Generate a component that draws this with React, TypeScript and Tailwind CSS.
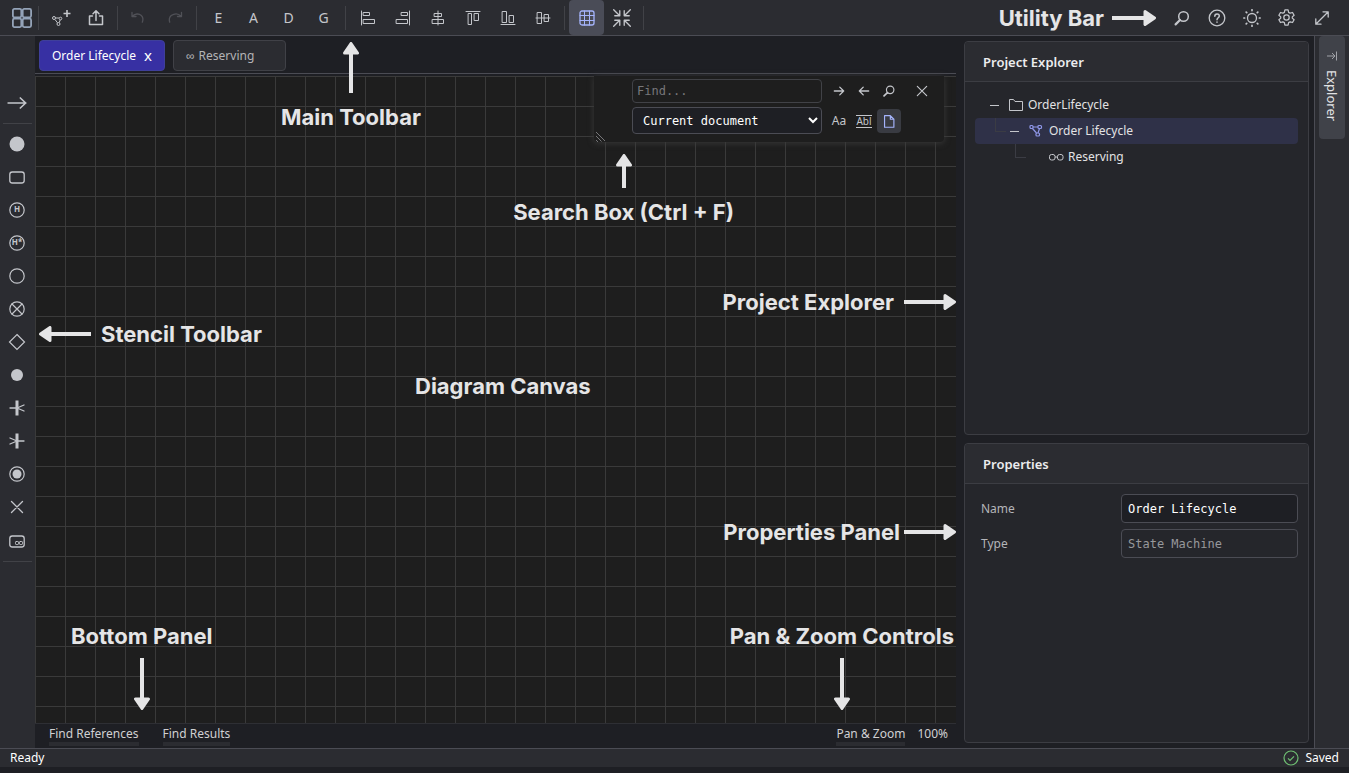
import { useState } from "react";
import type { ReactNode } from "react";
import clsx from "clsx";

type Direction = "up" | "down" | "left" | "right";

const Icon = ({ size = 18, children }: { size?: number; children: ReactNode }) => (
    <svg width={size} height={size} viewBox="0 0 18 18" fill="none" stroke="currentColor" strokeWidth="1" strokeLinecap="round" strokeLinejoin="round" aria-hidden="true">
        {children}
    </svg>
);

const Arrow = ({ direction, length }: { direction: Direction; length: number }) => {
    const vertical = direction === "up" || direction === "down";
    const transforms = {
        right: "",
        left: `rotate(180 ${length / 2} 8)`,
        up: `translate(0 ${length}) rotate(-90)`,
        down: "translate(16 0) rotate(90)",
    };

    return (
        <svg width={vertical ? 16 : length} height={vertical ? length : 16} fill="#e5e5e6" stroke="#e5e5e6" aria-hidden="true" className="shrink-0">
            <g transform={transforms[direction]}>
                <path d={`M0 8H${length - 8}`} strokeWidth="4" />
                <path d={`M${length - 11} 1.5L${length - 1.5} 8L${length - 11} 14.5Z`} strokeWidth="3" strokeLinejoin="round" />
            </g>
        </svg>
    );
};

const Label = ({ children }: { children: ReactNode }) => (
    <span className="font-['Inter',sans-serif] text-[22px] leading-7 font-bold whitespace-nowrap text-[#e5e5e6]">{children}</span>
);

const ToolButton = ({ label, active, disabled, children }: { label: string; active?: boolean; disabled?: boolean; children: ReactNode }) => (
    <button
        type="button"
        aria-label={label}
        disabled={disabled}
        className={clsx(
            "flex h-[35px] w-[35px] shrink-0 items-center justify-center rounded text-sm",
            active ? "bg-[#4a4c57] text-[#a5b4fc]" : disabled ? "text-[#505157]" : "text-[#c4c6cb]"
        )}
    >
        {children}
    </button>
);

const Divider = () => <div className="mx-1 h-6 w-px shrink-0 bg-[#414247]" />;

const alignTools = [
    { label: "Align left", icon: <path d="M2.5 2v14M4.5 3.5h6v3h-6zM4.5 10.5h11v4h-11z" /> },
    { label: "Align right", icon: <path d="M15.5 2v14M7.5 3.5h6v3h-6zM2.5 10.5h11v4h-11z" /> },
    { label: "Align center", icon: <path d="M9 2v14M5.5 4.5h7v3h-7zM3.5 10.5h11v4h-11z" /> },
    { label: "Align top", icon: <path d="M2 2.5h14M4.5 4.5h3v11h-3zM10.5 4.5h4v7h-4z" /> },
    { label: "Align bottom", icon: <path d="M2 15.5h14M3.5 2.5h4v11h-4zM10.5 6.5h4v7h-4z" /> },
    { label: "Align middle", icon: <path d="M2 9h14M3.5 3.5h4v11h-4zM10.5 5.5h4v7h-4z" /> },
];

const SearchIcon = ({ size = 18 }: { size?: number }) => (
    <Icon size={size}>
        <circle cx="10.5" cy="7.5" r="4.8" strokeWidth="1.5" />
        <path d="M7 11L2.6 15.4" strokeWidth="2.2" />
    </Icon>
);

const MainToolbar = () => (
    <header className="flex h-9 shrink-0 items-center border-b border-[#4b4c54] bg-[#2b2c31] pr-2.5">
        <button type="button" aria-label="Home" className="shrink-0 pr-0.5 pl-3 text-[#94a3b8]">
            <svg width="20" height="20" viewBox="0 0 20 20" fill="none" stroke="currentColor" strokeWidth="1.8" aria-hidden="true">
                <rect x="0.9" y="0.9" width="8.4" height="8.4" rx="1.5" />
                <rect x="10.7" y="0.9" width="8.4" height="8.4" rx="1.5" />
                <rect x="0.9" y="10.7" width="8.4" height="8.4" rx="1.5" />
                <rect x="10.7" y="10.7" width="8.4" height="8.4" rx="1.5" />
            </svg>
        </button>
        <Divider />
        <ToolButton label="New diagram">
            <svg width="20" height="20" viewBox="0 0 20 20" fill="none" stroke="currentColor" aria-hidden="true">
                <circle cx="3" cy="10" r="1.5" />
                <circle cx="9.5" cy="10.5" r="1.3" />
                <circle cx="7.5" cy="16" r="1.5" />
                <path d="M4.5 10h3.500M4 11.500l2.500 3.300M9.200 12l-1 2.500" />
                <path d="M16 2v7M12.5 5.500h7" strokeWidth="1.600" />
            </svg>
        </ToolButton>
        <ToolButton label="Export">
            <Icon>
                <path d="M5.500 7h-3v8.500h13V7h-3M9 11.500V2M6 4.800L9 1.800l3 3" strokeWidth="1.500" />
            </Icon>
        </ToolButton>
        <Divider />
        <ToolButton label="Undo" disabled>
            <Icon>
                <path d="M1 3.500v4h4M1.300 7.200C4 4.500 8 4.300 10.300 6.500c1.800 1.800 2.100 4 1 6.700" strokeWidth="1.300" />
            </Icon>
        </ToolButton>
        <ToolButton label="Redo" disabled>
            <Icon>
                <path d="M15.500 3.500v4h-4M15.200 7.200C12.500 4.500 8.500 4.300 5.200 6.500c-2 1.800-2.300 4-1.500 6.700" strokeWidth="1.300" />
            </Icon>
        </ToolButton>
        <Divider />
        {["E", "A", "D", "G"].map((letter) => (
            <ToolButton key={letter} label={letter}>{letter}</ToolButton>
        ))}
        <Divider />
        {alignTools.map((tool) => (
            <ToolButton key={tool.label} label={tool.label}>
                <Icon>{tool.icon}</Icon>
            </ToolButton>
        ))}
        <Divider />
        <ToolButton label="Toggle grid" active>
            <Icon>
                <rect x="2" y="2" width="14" height="14" rx="2" strokeWidth="1.300" />
                <path d="M6.500 2v14M11.500 2v14M2 6.500h14M2 11.500h14" />
            </Icon>
        </ToolButton>
        <ToolButton label="Fit to screen">
            <Icon size={20}>
                <path d="M1.500 1.500l5 5M7 2.500v4.500h-4.500M16.500 1.500l-5 5M11 2.500v4.500h4.500M1.500 16.500l5-5M7 15.500v-4.500h-4.500M16.500 16.500l-5-5M11 15.500v-4.500h4.500" strokeWidth="1.200" />
            </Icon>
        </ToolButton>
        <Divider />
        <div className="ml-auto flex items-center">
            <Label>Utility Bar</Label>
            <div className="mx-2 flex">
                <Arrow direction="right" length={44} />
            </div>
            <ToolButton label="Search">
                <SearchIcon />
            </ToolButton>
            <ToolButton label="Help">
                <Icon>
                    <circle cx="9" cy="9" r="7.800" strokeWidth="1.300" />
                    <path d="M6.800 7.200c0-3 4.500-3 4.500-.2C11.300 8.800 9 8.800 9 10.800M9 13v.2" strokeWidth="1.500" />
                </Icon>
            </ToolButton>
            <ToolButton label="Theme">
                <Icon>
                    <circle cx="9" cy="9" r="4.500" strokeWidth="1.300" />
                    <path d="M9 .8v.8M9 16.400v.8M.8 9h.8M16.400 9h.8M3.200 3.200l.5.5M14.300 14.300l.5.5M3.200 14.800l.5-.5M14.300 3.700l.5-.5" strokeWidth="1.700" />
                </Icon>
            </ToolButton>
            <ToolButton label="Settings">
                <svg width="19" height="19" viewBox="0 0 24 24" fill="none" stroke="currentColor" strokeWidth="1.600" strokeLinejoin="round" aria-hidden="true">
                    <path d="M10 2.500h4l.7 3 1.900 1.100 3-.9 2 3.400-2.300 2.100v1.600l2.300 2.100-2 3.400-3-.9-1.900 1.100-.7 3h-4l-.7-3-1.900-1.100-3 .9-2-3.400 2.300-2.100v-1.600L2.400 9.100l2-3.400 3 .9 1.900-1.100z" />
                    <circle cx="12" cy="12" r="3.400" />
                </svg>
            </ToolButton>
            <ToolButton label="Full screen">
                <Icon>
                    <path d="M3 15L15 3M10 2.800h5.200V8M2.800 10v5.200H8" strokeWidth="1.300" />
                </Icon>
            </ToolButton>
        </div>
    </header>
);

const stencils = [
    { label: "Initial", icon: <circle cx="9" cy="9" r="7.500" fill="currentColor" stroke="none" /> },
    { label: "State", icon: <rect x="1.800" y="4" width="14.400" height="11" rx="2.500" strokeWidth="1.300" /> },
    {
        label: "Shallow history",
        icon: (
            <>
                <circle cx="9" cy="9" r="7.200" strokeWidth="1.200" />
                <text x="9" y="11" textAnchor="middle" fontSize="8" fontWeight="700" fill="currentColor" stroke="none">H</text>
            </>
        ),
    },
    {
        label: "Deep history",
        icon: (
            <>
                <circle cx="9" cy="9" r="7.200" strokeWidth="1.200" />
                <text x="9" y="11" textAnchor="middle" fontSize="8" fontWeight="700" fill="currentColor" stroke="none">H*</text>
            </>
        ),
    },
    { label: "Junction", icon: <circle cx="9" cy="9" r="7.200" strokeWidth="1.200" /> },
    { label: "Exit point", icon: <><circle cx="9" cy="9" r="7.200" strokeWidth="1.200" /><path d="M4 4l10 10M14 4L4 14" strokeWidth="1.200" /></> },
    { label: "Choice", icon: <path d="M9 1.500L16.500 9L9 16.500L1.500 9z" strokeWidth="1.200" strokeLinejoin="miter" /> },
    { label: "Point", icon: <circle cx="9" cy="9" r="6" fill="currentColor" stroke="none" /> },
    { label: "Fork", icon: <><path d="M9 1.500v15" strokeWidth="3" strokeLinecap="butt" /><path d="M2 9h7l7-3M9 9l7 3" strokeWidth="1.300" /></> },
    { label: "Join", icon: <><path d="M9 1.500v15" strokeWidth="3" strokeLinecap="butt" /><path d="M16 9H9L2 6M9 9l-7 3" strokeWidth="1.300" /></> },
    { label: "Final", icon: <><circle cx="9" cy="9" r="7.200" strokeWidth="1.200" /><circle cx="9" cy="9" r="4.500" fill="currentColor" stroke="none" /></> },
    { label: "Terminate", icon: <path d="M3.500 3.500l11 11M14.500 3.500l-11 11" strokeWidth="1.300" /> },
    {
        label: "Submachine",
        icon: (
            <>
                <rect x="1.800" y="5" width="14.400" height="11" rx="2.500" strokeWidth="1.300" />
                <rect x="7.500" y="10.500" width="3" height="3" rx="0.800" />
                <rect x="11.500" y="10.500" width="3" height="3" rx="0.800" />
            </>
        ),
    },
];

const StencilToolbar = () => (
    <nav aria-label="Stencils" className="flex w-[35px] shrink-0 flex-col items-center bg-[#2b2c31] pt-[50px] text-[#c4c6cb]">
        <button type="button" aria-label="Transition" className="flex h-[33px] w-full items-center justify-center pr-px">
            <Icon size={20}>
                <path d="M1 9h16M12 4.500L16.800 9L12 13.500" strokeWidth="1.500" />
            </Icon>
        </button>
        <div className="my-1 h-px w-[29px] bg-[#414247]" />
        {stencils.map((stencil) => (
            <button key={stencil.label} type="button" aria-label={stencil.label} className="flex h-[33px] w-full items-center justify-center pr-px pb-px">
                <Icon>{stencil.icon}</Icon>
            </button>
        ))}
        <div className="my-1 h-px w-[29px] bg-[#414247]" />
    </nav>
);

const DocumentTabs = () => (
    <div className="flex h-[38px] shrink-0 items-center gap-2 border-b border-[#4b4c54] bg-[#1e1f24] px-1 pt-0.5">
        <div className="flex h-[31px] items-center rounded border border-[#3f3f9a] bg-[#3730a3] px-3 text-white">
            <button type="button" className="text-[12px]">Order Lifecycle</button>
            <button type="button" aria-label="Close Order Lifecycle" className="ml-2 text-[15px]">x</button>
        </div>
        <div className="flex h-[31px] w-[113px] items-center rounded border border-[#404147] bg-[#2b2c31] px-3 text-[#b4b4b6]">
            <button type="button" className="flex gap-1 text-[12px]">
                <span>∞</span>
                Reserving
            </button>
        </div>
    </div>
);

const SmallButton = ({ label, active, children }: { label: string; active?: boolean; children: ReactNode }) => (
    <button
        type="button"
        aria-label={label}
        className={clsx("flex h-6 w-6 items-center justify-center rounded text-[12px]", active ? "bg-[#393b42] text-[#a5b4fc]" : "text-[#c4c6cb]")}
    >
        {children}
    </button>
);

const SearchBox = () => {
    const [query, setQuery] = useState("");
    const [scope, setScope] = useState("document");

    return (
        <form role="search" className="absolute top-0 right-3 flex w-[350px] gap-[5px] rounded-b bg-[#1e1e1e] pt-[3px] pb-2 pl-[38px] shadow-[0_1px_6px_#3a3a3a]" onSubmit={(e) => e.preventDefault()}>
            <div className="flex w-[190px] flex-col gap-1">
                <input
                    type="text"
                    aria-label="Find"
                    value={query}
                    placeholder="Find..."
                    onChange={(e) => setQuery(e.target.value)}
                    className="h-6 w-full rounded border border-[#414247] bg-transparent px-1 font-['DejaVu_Sans_Mono',monospace] text-[12px] text-white placeholder:text-[#77777a]"
                />
                <select
                    aria-label="Search scope"
                    value={scope}
                    onChange={(e) => setScope(e.target.value)}
                    className="h-[27px] w-full rounded-sm border border-[#4b4c54] bg-[#1e1f24] px-1.5 font-['DejaVu_Sans_Mono',monospace] text-[12px] text-white"
                >
                    <option value="document">Current document</option>
                    <option value="project">Project</option>
                </select>
            </div>
            <div className="flex flex-col gap-1.5">
                <div className="flex gap-px">
                    <SmallButton label="Find next">
                        <Icon size={14}><path d="M3 9h12M10 4l5 5l-5 5" strokeWidth="1.700" /></Icon>
                    </SmallButton>
                    <SmallButton label="Find previous">
                        <Icon size={14}><path d="M15 9H3M8 4L3 9l5 5" strokeWidth="1.700" /></Icon>
                    </SmallButton>
                    <SmallButton label="Find all">
                        <SearchIcon size={14} />
                    </SmallButton>
                </div>
                <div className="flex gap-px">
                    <SmallButton label="Match case">Aa</SmallButton>
                    <SmallButton label="Whole word">
                        <span className="border-y border-current text-[10px] leading-[11px]">Abl</span>
                    </SmallButton>
                    <SmallButton label="Current document only" active>
                        <Icon size={16}><path d="M4 3h6.500l4 4v9h-10.500zM10.500 3v4h4" strokeWidth="1.300" /></Icon>
                    </SmallButton>
                </div>
            </div>
            <div className="ml-1">
                <SmallButton label="Close search">
                    <Icon size={14}><path d="M3 3l12 12M15 3L3 15" strokeWidth="1.500" /></Icon>
                </SmallButton>
            </div>
            <svg width="10" height="10" viewBox="0 0 10 10" stroke="#77777a" aria-hidden="true" className="absolute bottom-0 left-0.5">
                <path d="M0 0l9 9M0 4l5.500 5.500M0 8l2 2" />
            </svg>
        </form>
    );
};

const Workspace = () => (
    <main className="relative flex min-w-0 flex-1 flex-col">
        <DocumentTabs />
        <div className="relative mt-0.5 flex-1 bg-[#1e1e1e] bg-[linear-gradient(to_right,#3a3a3a_1px,transparent_1px),linear-gradient(to_bottom,#3a3a3a_1px,transparent_1px)] bg-size-[30px_30px]">
            <SearchBox />
            <div className="absolute top-[244px] left-1 flex items-center gap-2.5">
                <Arrow direction="left" length={52} />
                <Label>Stencil Toolbar</Label>
            </div>
            <div className="absolute top-[78px] right-[222px] flex flex-col items-center gap-2.5">
                <Arrow direction="up" length={34} />
                <Label>Search Box (Ctrl + F)</Label>
            </div>
            <div className="absolute top-[212px] right-0 flex items-center gap-2.5">
                <Label>Project Explorer</Label>
                <Arrow direction="right" length={52} />
            </div>
            <div className="absolute top-[296px] left-[380px]">
                <Label>Diagram Canvas</Label>
            </div>
            <div className="absolute right-0 bottom-[177px] flex items-center gap-1">
                <Label>Properties Panel</Label>
                <Arrow direction="right" length={52} />
            </div>
            <div className="absolute bottom-[13px] left-9 flex flex-col items-center gap-2">
                <Label>Bottom Panel</Label>
                <Arrow direction="down" length={52} />
            </div>
            <div className="absolute right-0.5 bottom-[13px] flex flex-col items-center gap-2">
                <Label>Pan &amp; Zoom Controls</Label>
                <Arrow direction="down" length={52} />
            </div>
        </div>
        <div className="absolute top-1.5 left-[246px] flex flex-col items-center gap-2.5">
            <Arrow direction="up" length={51} />
            <Label>Main Toolbar</Label>
        </div>
        <div className="flex h-[25px] shrink-0 items-start border-t border-[#2e2f34] bg-[#1e1f24] pr-2 pl-3.5 text-[12px] leading-[17px] text-[#d0d0d2]">
            <div className="flex flex-1 gap-6 pt-px">
                <button type="button" className="border-b-4 border-[#2b2c31]">Find References</button>
                <button type="button" className="border-b-4 border-[#2b2c31]">Find Results</button>
            </div>
            <div className="flex gap-3 pt-px">
                <button type="button" className="border-b-4 border-[#2b2c31]">Pan &amp; Zoom</button>
                <span>100%</span>
            </div>
        </div>
    </main>
);

const Panel = ({ title, className, children }: { title: string; className?: string; children: ReactNode }) => (
    <section className={clsx("flex flex-col rounded border border-[#3c3d43] bg-[#25262b]", className)}>
        <h2 className="flex h-10 shrink-0 items-center rounded-t border-b border-[#3c3d43] bg-[#2b2c31] pt-0.5 pl-[18px] text-[13px] font-semibold text-[#ececee]">{title}</h2>
        {children}
    </section>
);

const Minus = () => <span className="h-px w-[9px] shrink-0 bg-[#c4c6cb]" />;

const ProjectExplorer = () => (
    <Panel title="Project Explorer" className="min-h-0 flex-1">
        <ul className="px-2.5 pt-2.5 text-[12px] text-[#e2e2e4]">
            <li className="flex h-[26px] items-center pl-[15px]">
                <Minus />
                <svg width="16" height="14" viewBox="0 0 16 14" fill="none" stroke="#c4c6cb" aria-hidden="true" className="mr-1 ml-[9px]">
                    <path d="M1.500 1.500h4l1.500 2h7.500v9h-13z" />
                </svg>
                OrderLifecycle
            </li>
            <li className="flex h-[26px] items-center rounded-sm bg-[#2f3148] pl-5">
                <span className="mr-1 mb-3 h-[14px] w-[11px] border-b border-l border-[#3b3c44]" />
                <Minus />
                <svg width="14" height="14" viewBox="0 0 14 14" fill="none" stroke="#8f97e8" strokeWidth="1.200" aria-hidden="true" className="mr-1.5 ml-2.5">
                    <rect x="1" y="1.500" width="3" height="3" rx="1" />
                    <rect x="9" y="1.500" width="3.500" height="3" rx="1" />
                    <rect x="7" y="9" width="3.500" height="3" rx="1" />
                    <path d="M4 3h5M3.500 4.500l4 4.500M10.500 4.500L9 9" />
                </svg>
                Order Lifecycle
            </li>
            <li className="flex h-[26px] items-center pl-10">
                <span className="mb-3 h-[14px] w-[11px] border-b border-l border-[#3b3c44]" />
                <svg width="15" height="8" viewBox="0 0 15 8" fill="none" stroke="#c4c6cb" aria-hidden="true" className="mr-1 ml-[23px]">
                    <rect x="0.500" y="1.500" width="5.500" height="5.500" rx="2" />
                    <rect x="8.500" y="1.500" width="5.500" height="5.500" rx="2" />
                    <path d="M6 4h2.500" />
                </svg>
                Reserving
            </li>
        </ul>
    </Panel>
);

const PropertiesPanel = () => {
    const [name, setName] = useState("Order Lifecycle");

    return (
        <Panel title="Properties" className="h-[300px] shrink-0">
            <div className="grid grid-cols-[1fr_177px] items-center gap-y-1.5 py-2.5 pr-2.5 pl-4 text-[12px] text-[#b4b5b9]">
                <label htmlFor="name">Name</label>
                <input
                    id="name"
                    type="text"
                    value={name}
                    onChange={(e) => setName(e.target.value)}
                    className="h-[29px] w-full rounded-sm border border-[#4b4c54] bg-[#1e1f24] px-1.5 font-['DejaVu_Sans_Mono',monospace] text-[12px] text-white"
                />
                <label htmlFor="type">Type</label>
                <input
                    id="type"
                    type="text"
                    readOnly
                    value="State Machine"
                    className="h-[29px] w-full rounded-sm border border-[#4b4c54] bg-transparent px-1.5 font-['DejaVu_Sans_Mono',monospace] text-[12px] text-[#97989b]"
                />
            </div>
        </Panel>
    );
};

const App = () => {
    return (
        <div className="flex h-screen flex-col overflow-hidden bg-[#1e1f24] font-['Noto_Sans',sans-serif]">
            <MainToolbar />
            <div className="flex min-h-0 flex-1">
                <StencilToolbar />
                <Workspace />
                <aside className="flex w-[358px] shrink-0 flex-col gap-2 py-[5px] pr-[5px] pl-2">
                    <ProjectExplorer />
                    <PropertiesPanel />
                </aside>
                <div className="w-[35px] shrink-0 border-l border-[#4b4c54] bg-[#2b2c31] pl-1">
                    <button type="button" className="flex h-[103px] w-[26px] flex-col items-center gap-2 rounded bg-[#404249] pt-3.5 text-[#e2e2e4]">
                        <svg width="12" height="12" viewBox="0 0 12 12" fill="none" stroke="#a0a2a8" aria-hidden="true">
                            <path d="M1 6h8M6 3l3 3l-3 3M10.500 1.500v9" />
                        </svg>
                        <span className="text-[13px] leading-4 [writing-mode:vertical-rl]">Explorer</span>
                    </button>
                </div>
            </div>
            <footer className="mb-1.5 flex h-[19px] shrink-0 items-center justify-between border-t border-[#4b4c54] bg-[#2b2c31] px-2.5 text-[12px] text-white">
                <span>Ready</span>
                <span className="flex items-center gap-1.5">
                    <svg width="16" height="16" viewBox="0 0 16 16" fill="none" stroke="#6fbf73" strokeWidth="1.200" aria-hidden="true">
                        <circle cx="8" cy="8" r="7" />
                        <path d="M5 8.300l2 2l4-4" />
                    </svg>
                    Saved
                </span>
            </footer>
        </div>
    );
};

export default App;
